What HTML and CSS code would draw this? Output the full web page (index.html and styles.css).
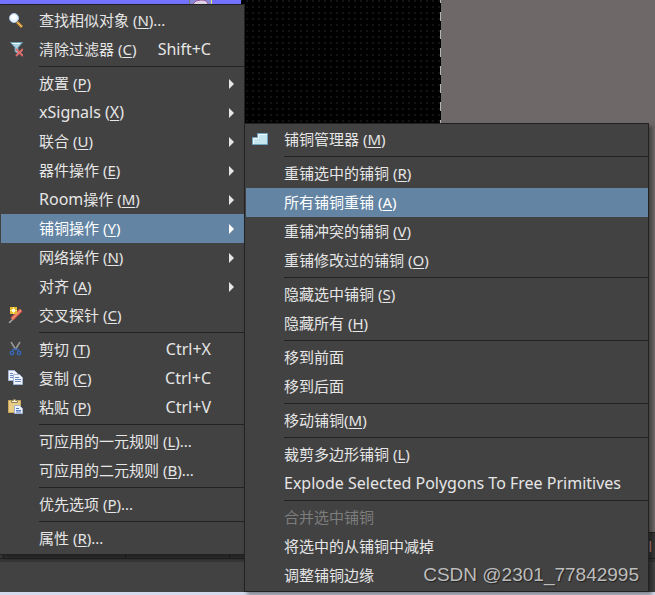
FILE: index.html
```
<!DOCTYPE html>
<html lang="zh-CN">
<head>
    <meta charset="utf-8">
    <title>PCB</title>
    <meta name="viewport" content="width=device-width">
    <link rel="stylesheet" href="styles.css">
</head>
<body>
    <div class="app">
        <div class="workspace">
            <div class="board">
                <div class="layer">
                    <svg class="pad" width="24" height="4" viewBox="0 0 24 4"><path fill="#8888d8" d="M0 0h23v4H0z"/><path fill="#e4e480" d="M22 0h1v4h-1z"/><path fill="#777" d="M0 0h1v4H0z"/><path fill="#ddd5e5" stroke="#9b5898" d="M4 4q2-4 8-4 6 0 7 4"/></svg>
                </div>
            </div>
            <div class="edge"></div>
            <div class="outside"></div>
        </div>
        <div class="tabs">
            <div class="tab narrow"></div>
            <div class="tab wide"></div>
            <div class="tab"></div>
            <span class="hint">l</span>
        </div>
        <div class="status"></div>
    </div>

    <!-- right click menu -->
    <div class="menu context" role="menu">
        <button class="item"><svg class="icon" viewBox="0 0 16 16"><path stroke="#c98a35" stroke-width="3" d="M10 10l5 5"/><path stroke="#f5cd73" d="M10 10l5 5"/><circle cx="7" cy="6" r="4.5" fill="#e9f6ff" stroke="#a9c9e8"/><path fill="#fff" d="M4 3h5v4H4z"/></svg><span class="label">查找相似对象 (<u>N</u>)...</span></button>
        <button class="item"><svg class="icon" viewBox="0 0 16 16"><path fill="#a9d2e2" stroke="#6f9eb5" d="M3.500 1.500h12l-4.500 5v6l-3-2v-4z"/><path stroke="#eafaff" d="M5 2.500h8"/><path stroke="#e06c6c" stroke-width="2" d="M9 8l7 7M16 8l-7 7"/></svg><span class="label">清除过滤器 (<u>C</u>)</span><span class="key">Shift+C</span></button>
        <hr>
        <button class="item sub"><span class="label">放置 (<u>P</u>)</span></button>
        <button class="item sub"><span class="label latin">xSignals (<u>X</u>)</span></button>
        <button class="item sub"><span class="label">联合 (<u>U</u>)</span></button>
        <button class="item sub"><span class="label">器件操作 (<u>E</u>)</span></button>
        <button class="item sub"><span class="label"><span class="latin">Room</span>操作 (<u>M</u>)</span></button>
        <button class="item sub active"><span class="label">铺铜操作 (<u>Y</u>)</span></button>
        <button class="item sub"><span class="label">网络操作 (<u>N</u>)</span></button>
        <button class="item sub"><span class="label">对齐 (<u>A</u>)</span></button>
        <button class="item"><svg class="icon" viewBox="0 0 16 16"><path stroke="#aaa" stroke-width="1.500" d="M2 16l4-4"/><path stroke="#c9503f" stroke-width="4" d="M5 12l9-9"/><path stroke="#f08b74" stroke-width="2" d="M5 12l9-9"/><path fill="#e8b92a" d="M3 0h7v7H3z"/><path stroke="#fff38a" d="M3 3.500h7M6.500 0v7"/><path fill="#fffce0" d="M5 2h3v3H5z"/></svg><span class="label">交叉探针 (<u>C</u>)</span></button>
        <hr>
        <button class="item"><svg class="icon" viewBox="0 0 16 16"><path stroke="#999" stroke-width="1.500" d="M4 1l5 8M13 1l-5 8"/><g fill="none" stroke="#3866b4" stroke-width="1.500"><path d="M5 9l3-1 4 1"/><circle cx="5" cy="12" r="1.700"/><circle cx="12" cy="12" r="1.700"/></g></svg><span class="label">剪切 (<u>T</u>)</span><span class="key">Ctrl+X</span></button>
        <button class="item"><svg class="icon" viewBox="0 0 16 16"><g fill="#eef3fc" stroke="#a4b4d6"><path d="M1.500 .5h6l3 3v7h-9z"/><path d="M6.500 4.500h6l3 3v7h-9z"/></g><path stroke="#6d88c0" d="M3 3.500h3M3 5.500h3M3 7.500h3M8 7.500h4M8 9.500h6M8 11.500h6"/></svg><span class="label">复制 (<u>C</u>)</span><span class="key">Ctrl+C</span></button>
        <button class="item"><svg class="icon" viewBox="0 0 16 16"><path fill="#e9cd82" stroke="#c9a85a" d="M1.500 1.500h12v12h-12z"/><path fill="#fff5cf" stroke="#8d8058" d="M4.500 3.500v-2h2v-1h2v1h2v2z"/><path fill="#eef3fc" stroke="#a4b4d6" d="M7.500 6.500h5l3 3v5h-8z"/><path stroke="#5278b8" d="M9 9.500h3M9 11.500h5M9 13h5"/></svg><span class="label">粘贴 (<u>P</u>)</span><span class="key">Ctrl+V</span></button>
        <hr>
        <button class="item"><span class="label">可应用的一元规则 (<u>L</u>)...</span></button>
        <button class="item"><span class="label">可应用的二元规则 (<u>B</u>)...</span></button>
        <hr>
        <button class="item"><span class="label">优先选项 (<u>P</u>)...</span></button>
        <hr>
        <button class="item"><span class="label">属性 (<u>R</u>)...</span></button>
    </div>

    <div class="menu polygon" role="menu">
        <button class="item"><svg class="icon" viewBox="0 0 16 16"><path fill="#c5e5ef" stroke="#6fa3c0" d="M.5 6.500h5v-4h10v11H.5z"/><path fill="none" stroke="#eefaff" d="M1.500 13V7.500h5v-4H15"/></svg><span class="label">铺铜管理器 (<u>M</u>)</span></button>
        <hr>
        <button class="item"><span class="label">重铺选中的铺铜 (<u>R</u>)</span></button>
        <button class="item active"><span class="label">所有铺铜重铺 (<u>A</u>)</span></button>
        <button class="item"><span class="label">重铺冲突的铺铜 (<u>V</u>)</span></button>
        <button class="item"><span class="label">重铺修改过的铺铜 (<u>O</u>)</span></button>
        <hr>
        <button class="item"><span class="label">隐藏选中铺铜 (<u>S</u>)</span></button>
        <button class="item"><span class="label">隐藏所有 (<u>H</u>)</span></button>
        <hr>
        <button class="item"><span class="label">移到前面</span></button>
        <button class="item"><span class="label">移到后面</span></button>
        <hr>
        <button class="item"><span class="label">移动铺铜(<u>M</u>)</span></button>
        <hr>
        <button class="item"><span class="label">裁剪多边形铺铜 (<u>L</u>)</span></button>
        <button class="item"><span class="label latin">Explode Selected Polygons To Free Primitives</span></button>
        <hr>
        <button class="item" disabled><span class="label">合并选中铺铜</span></button>
        <button class="item"><span class="label">将选中的从铺铜中减掉</span></button>
        <button class="item"><span class="label">调整铺铜边缘</span></button>
    </div>

    <div class="watermark">CSDN @2301_77842995</div>
</body>
</html>
```

FILE: styles.css
```
body {
    margin: 0;
    font-family: "Noto Sans", "Noto Sans CJK SC", sans-serif;
    font-size: 15px;
    color: #e6e6e6;
    overflow: hidden;
}

.app {
    display: flex;
    flex-direction: column;
    height: 100vh;
    background: #d5dbec;
}
.workspace {
    display: flex;
    flex: 1;
}
.board {
    width: 440px;
    background: #000 radial-gradient(circle at 1px 1px, #141414 1px, transparent 1px) 0 0 / 6px 6px;
}
.edge {
    width: 1px;
    background: repeating-linear-gradient(#b5b5b5 0 3px, #000 3px 12px, #b5b5b5 12px 18px);
}
.layer {
    width: 241px;
    height: 4px;
    background: #7373ff;
}
.pad {
    display: block;
    margin-left: 189px;
}
.outside {
    flex: 1;
    background: #6e6968;
}
.tabs {
    display: flex;
    height: 27px;
    background: #363636;
    border-top: 1px solid #222;
    border-bottom: 1px solid #222;
    box-sizing: border-box;
    line-height: 26px;
    color: #d08a80;
}
.tab {
    width: 103px;
    border-right: 1px solid #222;
}
.narrow {
    width: 3px;
}
.wide {
    width: 121px;
}
.hint {
    margin-left: auto;
    padding-right: 3px;
}
.status {
    height: 33px;
    background: #424242;
    border-top: 3px solid #363636;
    box-sizing: border-box;
    margin-bottom: 3px;
}

/* menus */
.menu {
    position: absolute;
    box-sizing: border-box;
    background: #424242;
    border: 1px solid #222;
    padding: 1px 0 1px 1px;
    box-shadow: 3px 3px 4px rgba(0, 0, 0, 0.4);
}
.context {
    top: 4px;
    left: 0;
    width: 245px;
    border-left: 0;
}
.polygon {
    top: 123px;
    left: 244px;
    width: 405px;
}
.item {
    display: flex;
    align-items: center;
    position: relative;
    width: 100%;
    height: 29px;
    border: 0;
    padding: 0 33px 0 38px;
    background: none;
    color: inherit;
    font: inherit;
    line-height: 29px;
    text-align: left;
    white-space: nowrap;
}
.item:disabled {
    color: #7d7d7d;
}
.active {
    background: #6384a3;
    color: #fff;
}
.item u {
    text-underline-offset: 2px;
    text-decoration-thickness: 1px;
}
.icon {
    position: absolute;
    left: 6px;
    top: 6px;
    width: 16px;
    height: 16px;
    fill: none;
}
.latin,
.key {
    font-size: 16px;
}
.key {
    margin-left: auto;
}
.sub::after {
    content: "";
    position: absolute;
    right: 10px;
    top: 10px;
    border: 5px solid transparent;
    border-left-color: currentColor;
    border-right: 0;
}
.menu hr {
    border: 0;
    height: 1px;
    margin: 2px 0 2px 38px;
    background: #222;
}

.watermark {
    position: absolute;
    right: 16px;
    bottom: 9px;
    font: 19px/22px "Liberation Sans", sans-serif;
    color: #bdbdbd;
    text-shadow: 1px 1px 1px #222;
}
```
